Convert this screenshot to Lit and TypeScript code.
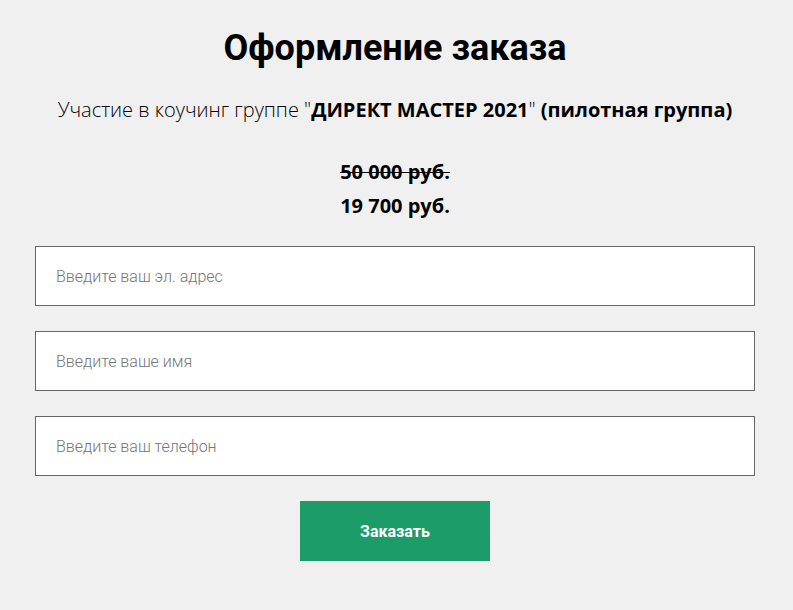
import { LitElement, html, css } from "lit";
import { customElement } from "lit/decorators.js";

interface Field {
  name: string;
  type: string;
  placeholder: string;
}

const FIELDS: Field[] = [
  { name: "email", type: "email", placeholder: "Введите ваш эл. адрес" },
  { name: "name", type: "text", placeholder: "Введите ваше имя" },
  { name: "phone", type: "tel", placeholder: "Введите ваш телефон" },
];

@customElement("app-root")
export class AppRoot extends LitElement {
  static styles = css`
    :host {
      display: block;
      min-height: 100vh;
      box-sizing: border-box;
      padding: 24px 38px 24px 35px;
      background: #f0f0f0;
      color: #000;
      font-family: "Open Sans", "Noto Sans", sans-serif;
      font-size: 20px;
      font-weight: 300;
      line-height: 34px;
      text-align: center;
    }
    .title {
      margin: 0;
      font-family: Roboto, sans-serif;
      font-size: 36px;
      font-weight: 700;
      line-height: 48px;
    }
    .offer {
      margin: 21px 0 28px;
    }
    .offer strong,
    .price strong {
      font-weight: 700;
    }
    .price {
      margin: 0;
    }
    .price s {
      text-decoration-thickness: 1px;
    }
    .form {
      display: flex;
      flex-direction: column;
      align-items: center;
      gap: 25px;
      margin-top: 23px;
    }
    .field {
      display: block;
      width: 100%;
    }
    .input {
      display: block;
      width: 100%;
      height: 60px;
      box-sizing: border-box;
      padding: 0 20px;
      border: 1px solid #666;
      border-radius: 0;
      background: #fff;
      color: #000;
      font: 300 16px Roboto, sans-serif;
    }
    .input::placeholder {
      color: #757575;
      opacity: 1;
    }
    .submit {
      height: 60px;
      padding: 0 60px;
      border: 0;
      background: #1b9c68;
      color: #fff;
      font: 700 16px Roboto, sans-serif;
      cursor: pointer;
    }
  `;

  render() {
    return html`
      <h1 class="title">Оформление заказа</h1>
      <p class="offer">
        Участие в коучинг группе "<strong>ДИРЕКТ МАСТЕР 2021</strong>" <strong>(пилотная группа)</strong>
      </p>
      <p class="price">
        <s><strong>50 000 руб.</strong></s><br />
        <strong>19 700 руб.</strong>
      </p>
      <form class="form" @submit=${(e: Event) => e.preventDefault()}>
        ${FIELDS.map(
          (f) => html`
            <label class="field">
              <input class="input" type=${f.type} name=${f.name} placeholder=${f.placeholder} aria-label=${f.placeholder} />
            </label>
          `
        )}
        <button class="submit" type="submit">Заказать</button>
      </form>
    `;
  }
}
